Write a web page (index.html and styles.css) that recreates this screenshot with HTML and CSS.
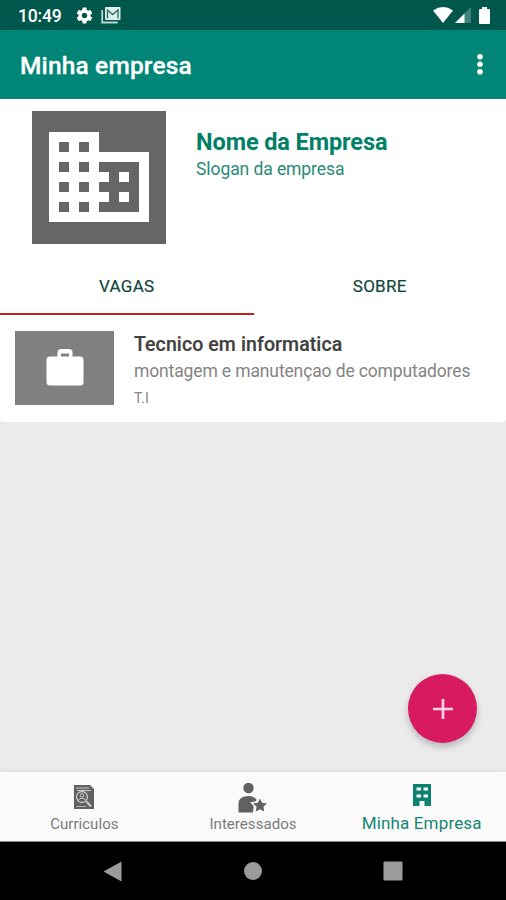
FILE: index.html
```html
<!DOCTYPE html>
<html lang="pt-BR">
<head>
<meta charset="utf-8">
<title>Minha empresa</title>
<link rel="stylesheet" href="styles.css">
</head>
<body>
<div class="screen">
  <header class="status">
    <span class="clock">10:49</span>
    <svg class="gear" viewBox="0 0 24 24"><path fill-rule="evenodd" d="M19.43 12.98c.04-.32.07-.64.07-.98s-.03-.66-.07-.98l2.11-1.65c.19-.15.24-.42.12-.64l-2-3.46c-.12-.22-.39-.3-.61-.22l-2.49 1c-.52-.4-1.08-.73-1.69-.98l-.38-2.65C14.46 2.18 14.25 2 14 2h-4c-.25 0-.46.18-.49.42l-.38 2.65c-.61.25-1.17.59-1.69.98l-2.49-1c-.23-.09-.49 0-.61.22l-2 3.46c-.13.22-.07.49.12.64l2.11 1.65c-.04.32-.07.65-.07.98s.03.66.07.98l-2.11 1.65c-.19.15-.24.42-.12.64l2 3.46c.12.22.39.3.61.22l2.49-1c.52.4 1.08.73 1.69.98l.38 2.65c.03.24.24.42.49.42h4c.25 0 .46-.18.49-.42l.38-2.65c.61-.25 1.17-.59 1.69-.98l2.49 1c.23.09.49 0 .61-.22l2-3.46c.12-.22.07-.49-.12-.64l-2.11-1.65zM12 15.5c-1.93 0-3.5-1.57-3.5-3.5s1.570-3.500 3.500-3.500 3.500 1.570 3.500 3.500-1.570 3.500-3.500 3.500z"/></svg>
    <svg class="mail" viewBox="0 0 20 18"><path d="M1.200 4v12.500h15.500" fill="none" stroke="#b9d3cf" stroke-width="1.800"/><rect x="4" y="1" width="15.500" height="13" rx="1" fill="#e2eeec"/><path d="M6.500 12.500V4l5.200 4.600L17 4v8.500" fill="none" stroke="#2c746a" stroke-width="1.400"/></svg>
    <span class="grow"></span>
    <svg class="wifi" viewBox="0 0 20 16"><path d="M0 3.500Q10-3.300 20 3.500L10 16z"/></svg>
    <svg class="signal" viewBox="0 0 16 16"><path d="M16 0v16H0z" fill="#3f8379"/><path d="M9.500 6.500V16H0z"/></svg>
    <svg class="battery" viewBox="0 0 11 17"><path d="M3 0h5v2h2a1 1 0 0 1 1 1v13a1 1 0 0 1-1 1H1a1 1 0 0 1-1-1V3a1 1 0 0 1 1-1h2z"/></svg>
  </header>
  <div class="appbar">
    <h1>Minha empresa</h1>
    <svg class="more" viewBox="0 0 6 22"><circle cx="3" cy="3.700" r="2.800"/><circle cx="3" cy="11.200" r="2.800"/><circle cx="3" cy="18.700" r="2.800"/></svg>
  </div>
  <section class="company">
    <div class="logo"><svg viewBox="0 0 24 24"><path d="M12 7V3H2v18h20V7H12zM6 19H4v-2h2v2zm0-4H4v-2h2v2zm0-4H4V9h2v2zm0-4H4V5h2v2zm4 12H8v-2h2v2zm0-4H8v-2h2v2zm0-4H8V9h2v2zm0-4H8V5h2v2zm10 12h-8v-2h2v-2h-2v-2h2v-2h-2V9h8v10zm-2-8h-2v2h2v-2zm0 4h-2v2h2v-2z"/></svg></div>
    <div class="company-text">
      <h2>Nome da Empresa</h2>
      <p>Slogan da empresa</p>
    </div>
  </section>
  <nav class="tabs">
    <span class="tab active">VAGAS</span>
    <span class="tab">SOBRE</span>
  </nav>
  <main>
    <article class="card">
      <div class="thumb"><svg viewBox="0 0 38 38"><path fill-rule="evenodd" d="M4 8.500h7.500V4.500a3.500 3.500 0 0 1 3.500-3.500h8a3.500 3.500 0 0 1 3.500 3.500v4H34a3.500 3.500 0 0 1 3.500 3.500v22a3.500 3.500 0 0 1-3.500 3.500H4A3.500 3.500 0 0 1 .5 34V12A3.500 3.500 0 0 1 4 8.500zM15 5.500v3h8v-3z"/></svg></div>
      <div class="job">
        <h3>Tecnico em informatica</h3>
        <p class="desc">montagem e manutençao de computadores</p>
        <p class="area">T.I</p>
      </div>
    </article>
    <div class="fab"><svg viewBox="0 0 20 20"><path d="M10 0v20M0 10h20"/></svg></div>
  </main>
  <footer class="bottom">
    <div class="item">
      <svg viewBox="0 0 30 30"><path d="M5 2h16l4 4v20H5z"/><g fill="none" stroke="#c8c8c8"><path d="M7 5h13M8 7.500h14" stroke-width="1"/><circle cx="13" cy="14" r="5.500" stroke-width="1.300"/><circle cx="13" cy="12.300" r="1.800"/><path d="M9 17.500q4-5 8 0"/><path d="M17.500 18.500l4.500 5" stroke-width="2.300"/><path d="M7 23.500h10" stroke-width=".8"/></g></svg>
      <span>Curriculos</span>
    </div>
    <div class="item">
      <svg viewBox="0 0 30 30"><circle cx="10.500" cy="5" r="5.200"/><path d="M.5 29.500V21q0-8 10-8 5.500 0 8.300 4l-1.800 1.500-4.800.8 3.500 4-.8 6.200z"/><path d="M22 15.500l2.100 4.300 4.900.6-3.600 3.300.9 4.800-4.300-2.300-4.300 2.300.9-4.800-3.600-3.300 4.900-.6z"/></svg>
      <span>Interessados</span>
    </div>
    <div class="item selected">
      <svg viewBox="0 0 30 30"><path fill-rule="evenodd" d="M6 1h18v22h-6.500v-5h-5v5H6zM9.500 4.500v3H14v-3zm7 0v3H21v-3zm-7 7v3H14v-3zm7 0v3H21v-3z"/></svg>
      <span>Minha Empresa</span>
    </div>
  </footer>
  <div class="system">
    <svg class="back" viewBox="0 0 19 21"><path d="M18.500.5v20L.5 10.500z"/></svg>
    <svg class="home" viewBox="0 0 18 18"><circle cx="9" cy="9" r="9"/></svg>
    <svg class="recent" viewBox="0 0 20 20"><rect x=".5" y=".5" width="19" height="19" rx="1"/></svg>
  </div>
</div>
</body>
</html>
```

FILE: styles.css
```css
* { box-sizing: border-box; margin: 0; padding: 0; }
body { font-family: Roboto, "Liberation Sans", sans-serif; background: #000; }
svg { display: block; fill: #fff; flex: none; }
h1, h2, h3, p, span { white-space: nowrap; }
.screen { width: 506px; height: 900px; display: flex; flex-direction: column; overflow: hidden; }
.status { height: 30px; background: #00574b; display: flex; align-items: center; padding: 0 16px 0 18px; color: #fff; }
.clock { font-size: 17.5px; font-weight: 500; line-height: 30px; width: 57px; padding-top: 2px; letter-spacing: -.15px; }
.gear { width: 19px; height: 19px; }
.mail { width: 20px; height: 18px; margin-left: 7px; }
.grow { flex: 1; }
.wifi { width: 20px; height: 16px; }
.signal { width: 16px; height: 16px; margin-left: 2px; }
.battery { width: 11px; height: 17px; margin-left: 8px; }
.appbar { height: 69px; background: #008577; border-bottom: 1px solid #28776c; display: flex; align-items: center; justify-content: space-between; padding: 0 23px 0 20px; }
h1 { color: #fff; font-size: 24.5px; font-weight: 500; line-height: 30px; padding-top: 4px; letter-spacing: .15px; -webkit-text-stroke: .3px #fff; }
.more { width: 6px; height: 22px; }
.company { height: 159px; background: #fff; display: flex; padding: 12px 0 0 32px; }
.logo { width: 134px; height: 133px; background: #666; padding: 6px 7px; }
.logo svg { width: 120px; height: 120px; }
.company-text { padding: 16px 0 0 30px; color: #008066; }
h2 { font-size: 23.5px; font-weight: 700; line-height: 30px; letter-spacing: -.1px; }
.company-text p { font-size: 17.5px; line-height: 24px; color: #288b77; letter-spacing: -.08px; }
.tabs { height: 57px; background: #fff; display: flex; }
.tab { width: 253px; height: 57px; display: flex; justify-content: center; padding-top: 17px; font-size: 17px; line-height: 22px; letter-spacing: .3px; color: #12483b; -webkit-text-stroke: .2px #12483b; }
.tab.active { border-bottom: 2px solid #c8201f; width: 254px; }
main { height: 457px; background: #ebebeb; position: relative; }
.card { height: 107px; background: #fff; border-radius: 0 0 4px 4px; display: flex; padding: 16px 15px; }
.thumb { width: 99px; height: 74px; background: #808080; display: flex; align-items: flex-start; justify-content: center; padding-top: 17px; }
.thumb svg { width: 38px; height: 38px; }
.job { padding: 1px 0 0 20px; }
h3 { font-size: 19.5px; font-weight: 500; line-height: 26px; color: #404040; letter-spacing: .1px; -webkit-text-stroke: .2px #404040; }
.desc { font-size: 17.5px; line-height: 26px; color: #848484; letter-spacing: -.13px; }
.area { font-size: 14px; line-height: 26px; color: #848484; letter-spacing: .2px; padding-top: 1px; }
.fab { position: absolute; left: 408px; top: 359px; width: 69px; height: 69px; border-radius: 50%; background: #d81b60; display: flex; align-items: center; justify-content: center; box-shadow: 0 4px 7px rgba(0,0,0,.22); }
.fab svg { width: 20px; height: 20px; fill: none; stroke: #ffd3e3; stroke-width: 2.6; }
.bottom { height: 70px; background: #fafafa; border-top: 1px solid #fff; border-bottom: 1px solid #888; display: flex; box-shadow: 0 -1px 3px rgba(0,0,0,.08); position: relative; }
.item { flex: 1; display: flex; flex-direction: column; align-items: center; padding-top: 10px; color: #7a7a7a; font-size: 15px; line-height: 20px; letter-spacing: .05px; }
.item svg { width: 30px; height: 30px; fill: #616161; }
.item span { padding-top: 1px; }
.selected { color: #168774; font-size: 17px; letter-spacing: .15px; }
.selected span { padding-top: 0; }
.selected svg { fill: #0d8270; }
.system { height: 58px; background: #000; display: flex; justify-content: space-between; align-items: center; padding: 0 103px; }
.system svg { fill: #9b9b9b; }
.back { width: 19px; height: 21px; }
.home { width: 18px; height: 18px; }
.recent { width: 20px; height: 20px; }
```
